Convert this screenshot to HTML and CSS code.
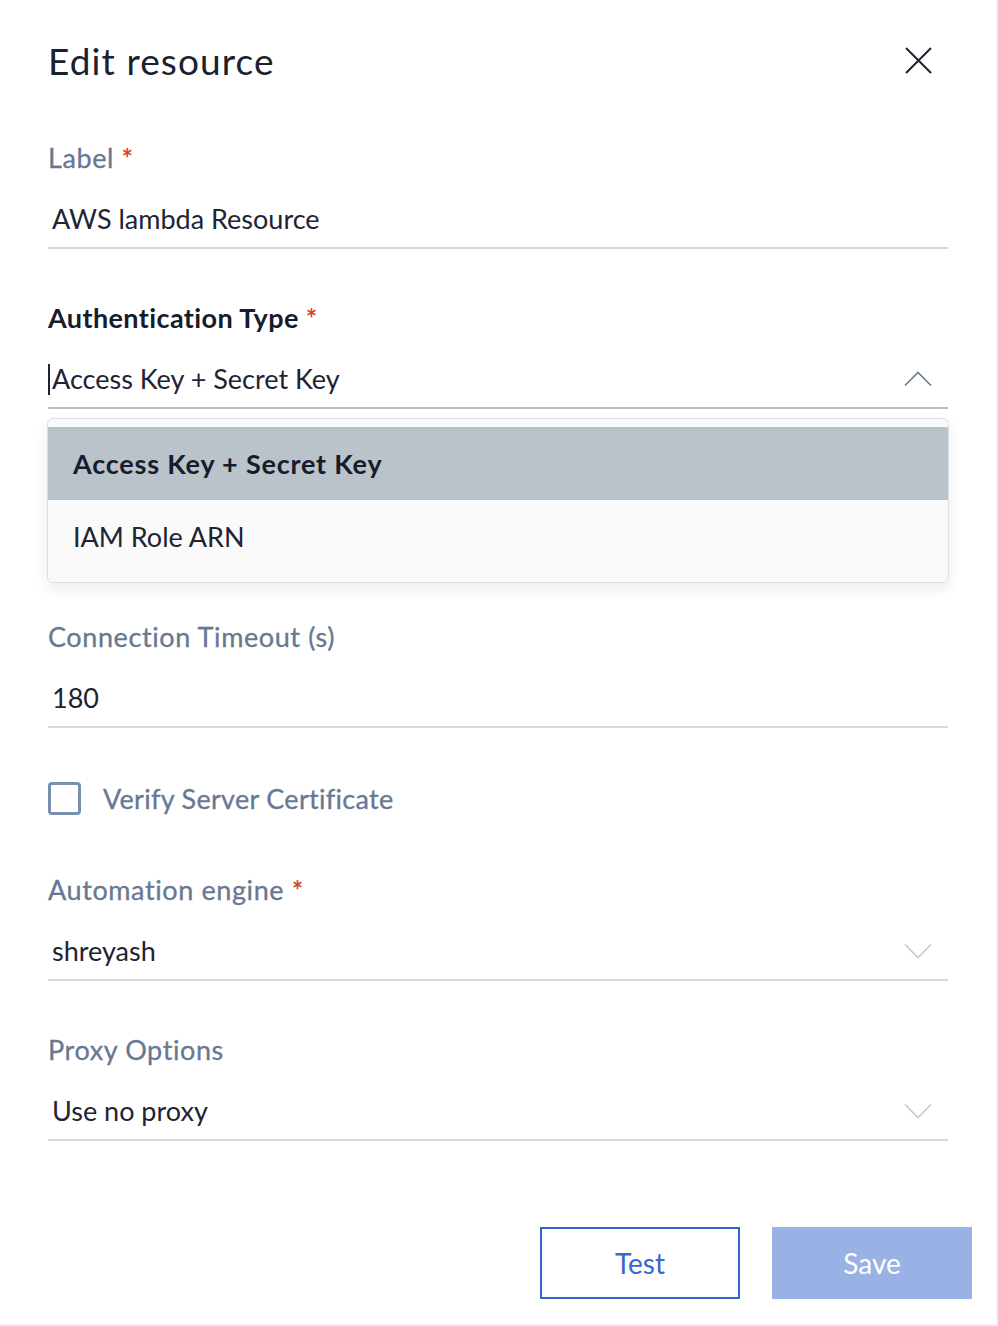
FILE: index.html
```html
<!DOCTYPE html>
<html lang="en">
<head>
    <meta charset="UTF-8">
    <meta name="viewport" content="width=device-width, initial-scale=1.0">
    <title>Edit resource</title>
    <link rel="stylesheet" href="styles.css">
</head>
<body>
    <div class="panel">
        <div class="panel-head">
            <h2>Edit resource</h2>
            <button class="close-btn" type="button" aria-label="Close">
                <svg width="28" height="28" viewBox="0 0 28 28">
                    <path d="M1 1 L26 26 M26 1 L1 26" stroke="#1c2333" stroke-width="2" fill="none"/>
                </svg>
            </button>
        </div>

        <form class="fields">
            <div class="field">
                <label class="field-label">Label <span class="req">*</span></label>
                <div class="input">AWS lambda Resource</div>
            </div>

            <div class="field field-open">
                <label class="field-label">Authentication Type <span class="req">*</span></label>
                <div class="input select">
                    <span class="caret"></span>
                    <span class="value">Access Key + Secret Key</span>
                    <svg class="chevron" width="28" height="16" viewBox="0 0 28 16">
                        <polyline points="1,14.5 14,1.5 27,14.5" stroke="#6b7a90" stroke-width="1.6" fill="none"/>
                    </svg>
                </div>
                <ul class="menu">
                    <li class="menu-item active">Access Key + Secret Key</li>
                    <li class="menu-item">IAM Role ARN</li>
                </ul>
            </div>

            <div class="field">
                <label class="field-label">Connection Timeout (s)</label>
                <div class="input">180</div>
            </div>

            <label class="check-row">
                <span class="checkbox"></span>
                <span class="check-text">Verify Server Certificate</span>
            </label>

            <div class="field">
                <label class="field-label">Automation engine <span class="req">*</span></label>
                <div class="input select">
                    <span class="value">shreyash</span>
                    <svg class="chevron" width="28" height="16" viewBox="0 0 28 16">
                        <polyline points="1,1.5 14,14.5 27,1.5" stroke="#c6cbd2" stroke-width="1.6" fill="none"/>
                    </svg>
                </div>
            </div>

            <div class="field">
                <label class="field-label">Proxy Options</label>
                <div class="input select">
                    <span class="value">Use no proxy</span>
                    <svg class="chevron" width="28" height="16" viewBox="0 0 28 16">
                        <polyline points="1,1.5 14,14.5 27,1.5" stroke="#c6cbd2" stroke-width="1.6" fill="none"/>
                    </svg>
                </div>
            </div>
        </form>

        <div class="actions">
            <button class="btn btn-outline" type="button">Test</button>
            <button class="btn btn-primary" type="button" disabled>Save</button>
        </div>
    </div>
</body>
</html>
```

FILE: styles.css
```css
body {
    margin: 0;
    background: #ffffff;
    font-family: Lato, "Liberation Sans", sans-serif;
    color: #1e2433;
}
.panel {
    width: 900px;
    height: 1324px;
    padding: 0 48px;
    border-right: 2px solid #edf0f4;
    border-bottom: 2px solid #edf0f4;
    background: #fff;
}
.panel-head {
    display: flex;
    align-items: center;
    justify-content: space-between;
    padding-top: 39px;
}
.panel-head h2 {
    margin: 0;
    font-size: 37px;
    line-height: 44px;
    font-weight: 400;
    letter-spacing: 1.1px;
    color: #1b2130;
}
.close-btn {
    border: 0;
    background: none;
    padding: 0;
    margin-right: 15px;
    width: 28px;
    height: 28px;
    cursor: pointer;
}
.fields {
    display: flex;
    flex-direction: column;
    margin-top: 57px;
}
.field {
    margin-bottom: 51px;
}
.field-label {
    display: block;
    font-size: 27px;
    line-height: 36px;
    letter-spacing: 0.6px;
    color: #687892;
    -webkit-text-stroke: 0.3px #687892;
}
.field-open .field-label {
    color: #161c2b;
    font-weight: 700;
    letter-spacing: 0.4px;
    -webkit-text-stroke: 0;
}
.req {
    color: #d44434;
    font-weight: 700;
    -webkit-text-stroke: 0;
}
.input {
    display: flex;
    align-items: center;
    padding: 25px 16px 10px 4px;
    font-size: 27px;
    line-height: 36px;
    border-bottom: 2px solid #d5dadf;
    color: #1e2433;
}
.select .value {
    flex: 1;
}
.field-open .input {
    padding-left: 0;
    border-bottom-color: #b7bec6;
}
.caret {
    display: inline-block;
    width: 2px;
    height: 31px;
    background: #1e2433;
    margin-right: 2px;
}
.chevron {
    flex: none;
}
.field-open {
    margin-bottom: 36px;
}
.menu {
    list-style: none;
    margin: 9px -1px 0;
    padding: 8px 0 9px;
    background: #fafafa;
    border: 1px solid #dcdfe3;
    border-radius: 6px;
    box-shadow: 0 6px 14px rgba(0, 0, 0, 0.08);
}
.menu-item {
    height: 73px;
    display: flex;
    align-items: center;
    padding-left: 25px;
    font-size: 27px;
    color: #1e2433;
}
.menu-item.active {
    background: #bac2ca;
    font-weight: 700;
    letter-spacing: 0.8px;
    color: #161c2b;
}
.check-row {
    display: flex;
    align-items: center;
    gap: 22px;
    height: 36px;
    margin-top: 1px;
    margin-bottom: 56px;
    font-size: 27px;
    color: #687892;
}
.check-text {
    letter-spacing: 0.3px;
    -webkit-text-stroke: 0.3px #687892;
}
.checkbox {
    width: 27px;
    height: 27px;
    border: 3px solid #7890ab;
    border-radius: 4px;
}
.actions {
    display: flex;
    justify-content: flex-end;
    gap: 32px;
    margin-top: 35px;
    margin-right: -24px;
}
.btn {
    width: 200px;
    height: 72px;
    font-family: inherit;
    font-size: 28px;
    cursor: pointer;
}
.btn-outline {
    background: #fff;
    border: 2px solid #3366cc;
    color: #3767d0;
}
.btn-primary {
    background: #99b1e5;
    border: 0;
    color: #fff;
}
```
